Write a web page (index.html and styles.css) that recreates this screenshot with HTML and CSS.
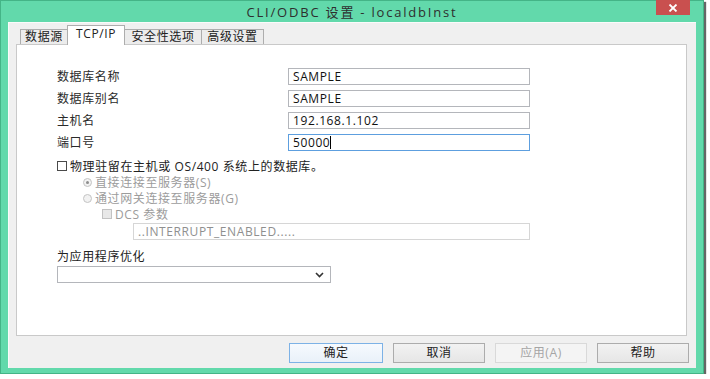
FILE: index.html
```html
<!DOCTYPE html>
<html lang="zh-CN">
<head>
<meta charset="utf-8">
<title>CLI/ODBC 设置 - localdbInst</title>
<link rel="stylesheet" href="styles.css">
</head>
<body>
<div class="window">
  <div class="titlebar">
    <span class="title">CLI/ODBC 设置 - localdbInst</span>
    <div class="close"><svg width="10" height="8" viewBox="0 0 10 8"><path d="M1.5 0.5 L8.5 7.5 M8.5 0.5 L1.5 7.5" stroke="#fff" stroke-width="1.8"/></svg></div>
  </div>
  <div class="client">
    <div class="tabs">
      <div class="tab t1">数据源</div>
      <div class="tab t2 active">TCP/IP</div>
      <div class="tab t3">安全性选项</div>
      <div class="tab t4">高级设置</div>
    </div>
    <div class="panel">
      <div class="fields">
        <span class="label">数据库名称</span><div class="input">SAMPLE</div>
        <span class="label">数据库别名</span><div class="input">SAMPLE</div>
        <span class="label">主机名</span><div class="input">192.168.1.102</div>
        <span class="label">端口号</span><div class="input focus">50000<span class="caret"></span></div>
      </div>
      <div class="row check-row">
        <span class="checkbox"></span><span>物理驻留在主机或 OS/400 系统上的数据库。</span>
      </div>
      <div class="row sub disabled">
        <span class="radio checked"></span><span>直接连接至服务器(S)</span>
      </div>
      <div class="row sub disabled">
        <span class="radio"></span><span>通过网关连接至服务器(G)</span>
      </div>
      <div class="row sub2 disabled">
        <span class="checkbox dis"></span><span>DCS 参数</span>
      </div>
      <div class="input dcs">..INTERRUPT_ENABLED.....</div>
      <div class="row opt-label">为应用程序优化</div>
      <div class="select">
        <svg width="9" height="6" viewBox="0 0 9 6"><path d="M1 1 L4.5 4.5 L8 1" fill="none" stroke="#333" stroke-width="1.6"/></svg>
      </div>
    </div>
    <div class="buttons">
      <div class="btn default">确定</div>
      <div class="btn">取消</div>
      <div class="btn disabled-btn">应用(A)</div>
      <div class="btn">帮助</div>
    </div>
  </div>
</div>
</body>
</html>
```

FILE: styles.css
```css
html, body {
  margin: 0;
  padding: 0;
  background: #ffffff;
}

body {
  font-family: "Open Sans", "Noto Sans CJK SC", sans-serif;
  font-size: 12px;
  letter-spacing: 0.6px;
  color: #222;
}

.window {
  width: 704px;
  height: 374px;
  box-sizing: border-box;
  background: #62d9ab;
  border: 1px solid #44b487;
  box-shadow: 2px 2px 1px rgba(50, 50, 50, 0.75);
  padding: 0 7px 5px 7px;
  display: flex;
  flex-direction: column;
}

.titlebar {
  height: 21px;
  display: flex;
  align-items: center;
  justify-content: center;
  position: relative;
}

.title {
  font-size: 13px;
  letter-spacing: 1.8px;
  color: #2e2e2e;
}

.close {
  position: absolute;
  top: -1px;
  right: 6px;
  width: 34px;
  height: 15px;
  background: #c9504f;
  display: flex;
  align-items: center;
  justify-content: center;
}

.client {
  flex: 1;
  background: #f0f0f0;
  border-left: 1px solid #fbfbfb;
  border-top: 1px solid #fbfbfb;
  padding: 2px 9px 5px 7px;
  display: flex;
  flex-direction: column;
}

.tabs {
  display: flex;
  align-items: flex-end;
  height: 20px;
  padding-left: 4px;
  margin-bottom: -1px;
  position: relative;
  z-index: 1;
}

.tab {
  box-sizing: border-box;
  height: 15px;
  margin-bottom: 1px;
  border: 1px solid #adadad;
  border-bottom: none;
  background: #ececec;
  text-align: center;
  line-height: 13px;
  color: #222;
}

.t1 { width: 48px; }
.t2 { width: 58px; margin-left: -1px; }
.t3 { width: 78px; margin-left: -1px; }
.t4 { width: 63px; margin-left: -1px; }

.tab.active {
  height: 20px;
  margin-bottom: 0;
  background: #fff;
  line-height: 16px;
}

.panel {
  flex: 1;
  background: #fff;
  border: 1px solid #c9c9c9;
  padding: 22px 0 0 40px;
}

.fields {
  display: grid;
  grid-template-columns: 231px 242px;
  row-gap: 4px;
  align-items: center;
}

.label {
  color: #2a2a2a;
}

.input {
  box-sizing: border-box;
  height: 17px;
  border: 1px solid #b4b6bb;
  padding-left: 4px;
  line-height: 15px;
  color: #111;
  background: #fff;
  display: flex;
  align-items: center;
}

.input.focus {
  border-color: #5d9fdf;
}

.caret {
  display: inline-block;
  width: 1px;
  height: 13px;
  background: #000;
  margin-left: 0;
}

.row {
  display: flex;
  align-items: center;
  height: 16px;
}

.check-row {
  margin-top: 7px;
}

.checkbox {
  box-sizing: border-box;
  width: 10px;
  height: 10px;
  border: 1px solid #4a4a4a;
  background: #fff;
  margin-right: 3px;
}

.checkbox.dis {
  border-color: #c2c2c2;
  background: #e8e8e8;
}

.sub {
  padding-left: 26px;
}

.sub2 {
  padding-left: 45px;
}

.disabled {
  color: #9c9c9c;
}

.radio {
  box-sizing: border-box;
  width: 9px;
  height: 9px;
  border-radius: 50%;
  border: 1px solid #c4c4c4;
  background: #f2f2f2;
  margin-right: 3px;
  display: flex;
  align-items: center;
  justify-content: center;
}

.radio.checked::after {
  content: "";
  width: 3px;
  height: 3px;
  border-radius: 50%;
  background: #8d8d8d;
}

.input.dcs {
  margin-left: 76px;
  width: 397px;
  margin-top: 1px;
  color: #8f8f8f;
  border-color: #d6d6d6;
}

.opt-label {
  margin-top: 8px;
}

.select {
  box-sizing: border-box;
  margin-top: 2px;
  width: 274px;
  height: 17px;
  border: 1px solid #b4b6bb;
  display: flex;
  align-items: center;
  justify-content: flex-end;
  padding-right: 6px;
}

.buttons {
  display: flex;
  justify-content: flex-end;
  gap: 10px;
  margin-top: 7px;
  margin-right: -2px;
}

.btn {
  box-sizing: border-box;
  width: 92px;
  height: 20px;
  border: 1px solid #acacac;
  background: linear-gradient(#f2f2f2, #e6e6e6);
  text-align: center;
  line-height: 18px;
  color: #222;
}

.btn.default {
  width: 94px;
  border-color: #7db2e6;
  background: linear-gradient(#f6fafe, #e9f1f9);
}

.btn.disabled-btn {
  border-color: #d9d9d9;
  background: #f4f4f4;
  color: #a5a5a5;
}
```
